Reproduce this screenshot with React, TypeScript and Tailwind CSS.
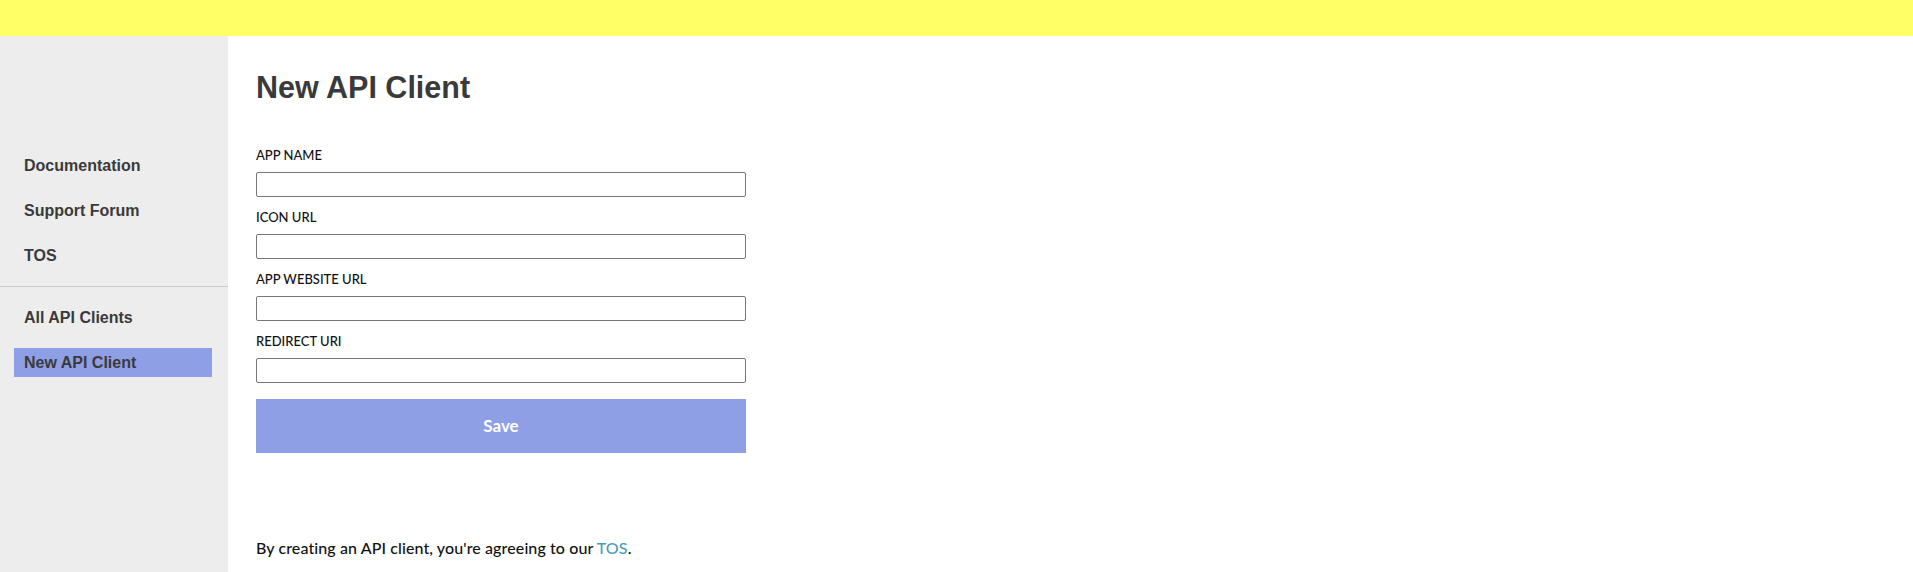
import React from 'react';

const navTop = ['Documentation', 'Support Forum', 'TOS'];

interface FieldProps {
  label: string;
}

const Field: React.FC<FieldProps> = ({ label }) => {
  return (
    <div className="flex flex-col">
      <label className="text-[13px] leading-[15px] font-medium text-[#111] mb-[9px]">{label}</label>
      <input type="text" className="h-[25px] w-[490px] border border-[#767676] rounded-[2px] bg-white px-2" />
    </div>
  );
};

const App: React.FC = () => {
  return (
    <div className="min-h-screen flex flex-col bg-white">
      <div className="h-[36px] bg-[#ffff66]" />

      <div className="flex flex-1">
        {/* sidebar */}
        <aside
          className="w-[228px] shrink-0 bg-[#ededed] pt-[115px]"
          style={{ fontFamily: '"Liberation Sans", Arial, sans-serif' }}
        >
          <ul className="flex flex-col gap-[16px] pl-[14px] pr-[16px]">
            {navTop.map((item) => (
              <li key={item} className="h-[29px] leading-[29px] px-[10px] text-[16px] font-bold text-[#3a3a3a]">
                {item}
              </li>
            ))}
          </ul>
          <div className="h-px bg-[#c9c9c9] mt-[16px]" />
          <ul className="flex flex-col gap-[16px] pl-[14px] pr-[16px] mt-[16px]">
            <li className="h-[29px] leading-[29px] px-[10px] text-[16px] font-bold text-[#3a3a3a]">All API Clients</li>
            <li className="h-[29px] leading-[29px] px-[10px] text-[16px] font-bold text-[#3a3a3a] bg-[#8f9fe6]">New API Client</li>
          </ul>
        </aside>

        {/* main */}
        <main className="flex-1 pl-[28px] pt-[33px]" style={{ fontFamily: 'Lato, "Open Sans", sans-serif' }}>
          <h1
            className="text-[30.5px] leading-[36px] font-bold text-[#3a3a3a]"
            style={{ fontFamily: '"Liberation Sans", Arial, sans-serif' }}
          >
            New API Client
          </h1>

          <form className="mt-[43px] flex flex-col gap-[13px]">
            <Field label="APP NAME" />
            <Field label="ICON URL" />
            <Field label="APP WEBSITE URL" />
            <Field label="REDIRECT URI" />
            <button
              type="button"
              className="mt-[3px] h-[54px] w-[490px] bg-[#8f9fe6] text-white text-[17px] font-bold"
            >
              Save
            </button>
          </form>

          <p className="mt-[83px] text-[16px] leading-[24px] font-medium tracking-[0.1px] text-[#111]">
            By creating an API client, you're agreeing to our{' '}
            <a className="text-[#4a9bbb]">TOS</a>.
          </p>
        </main>
      </div>
    </div>
  );
};

export default App;
